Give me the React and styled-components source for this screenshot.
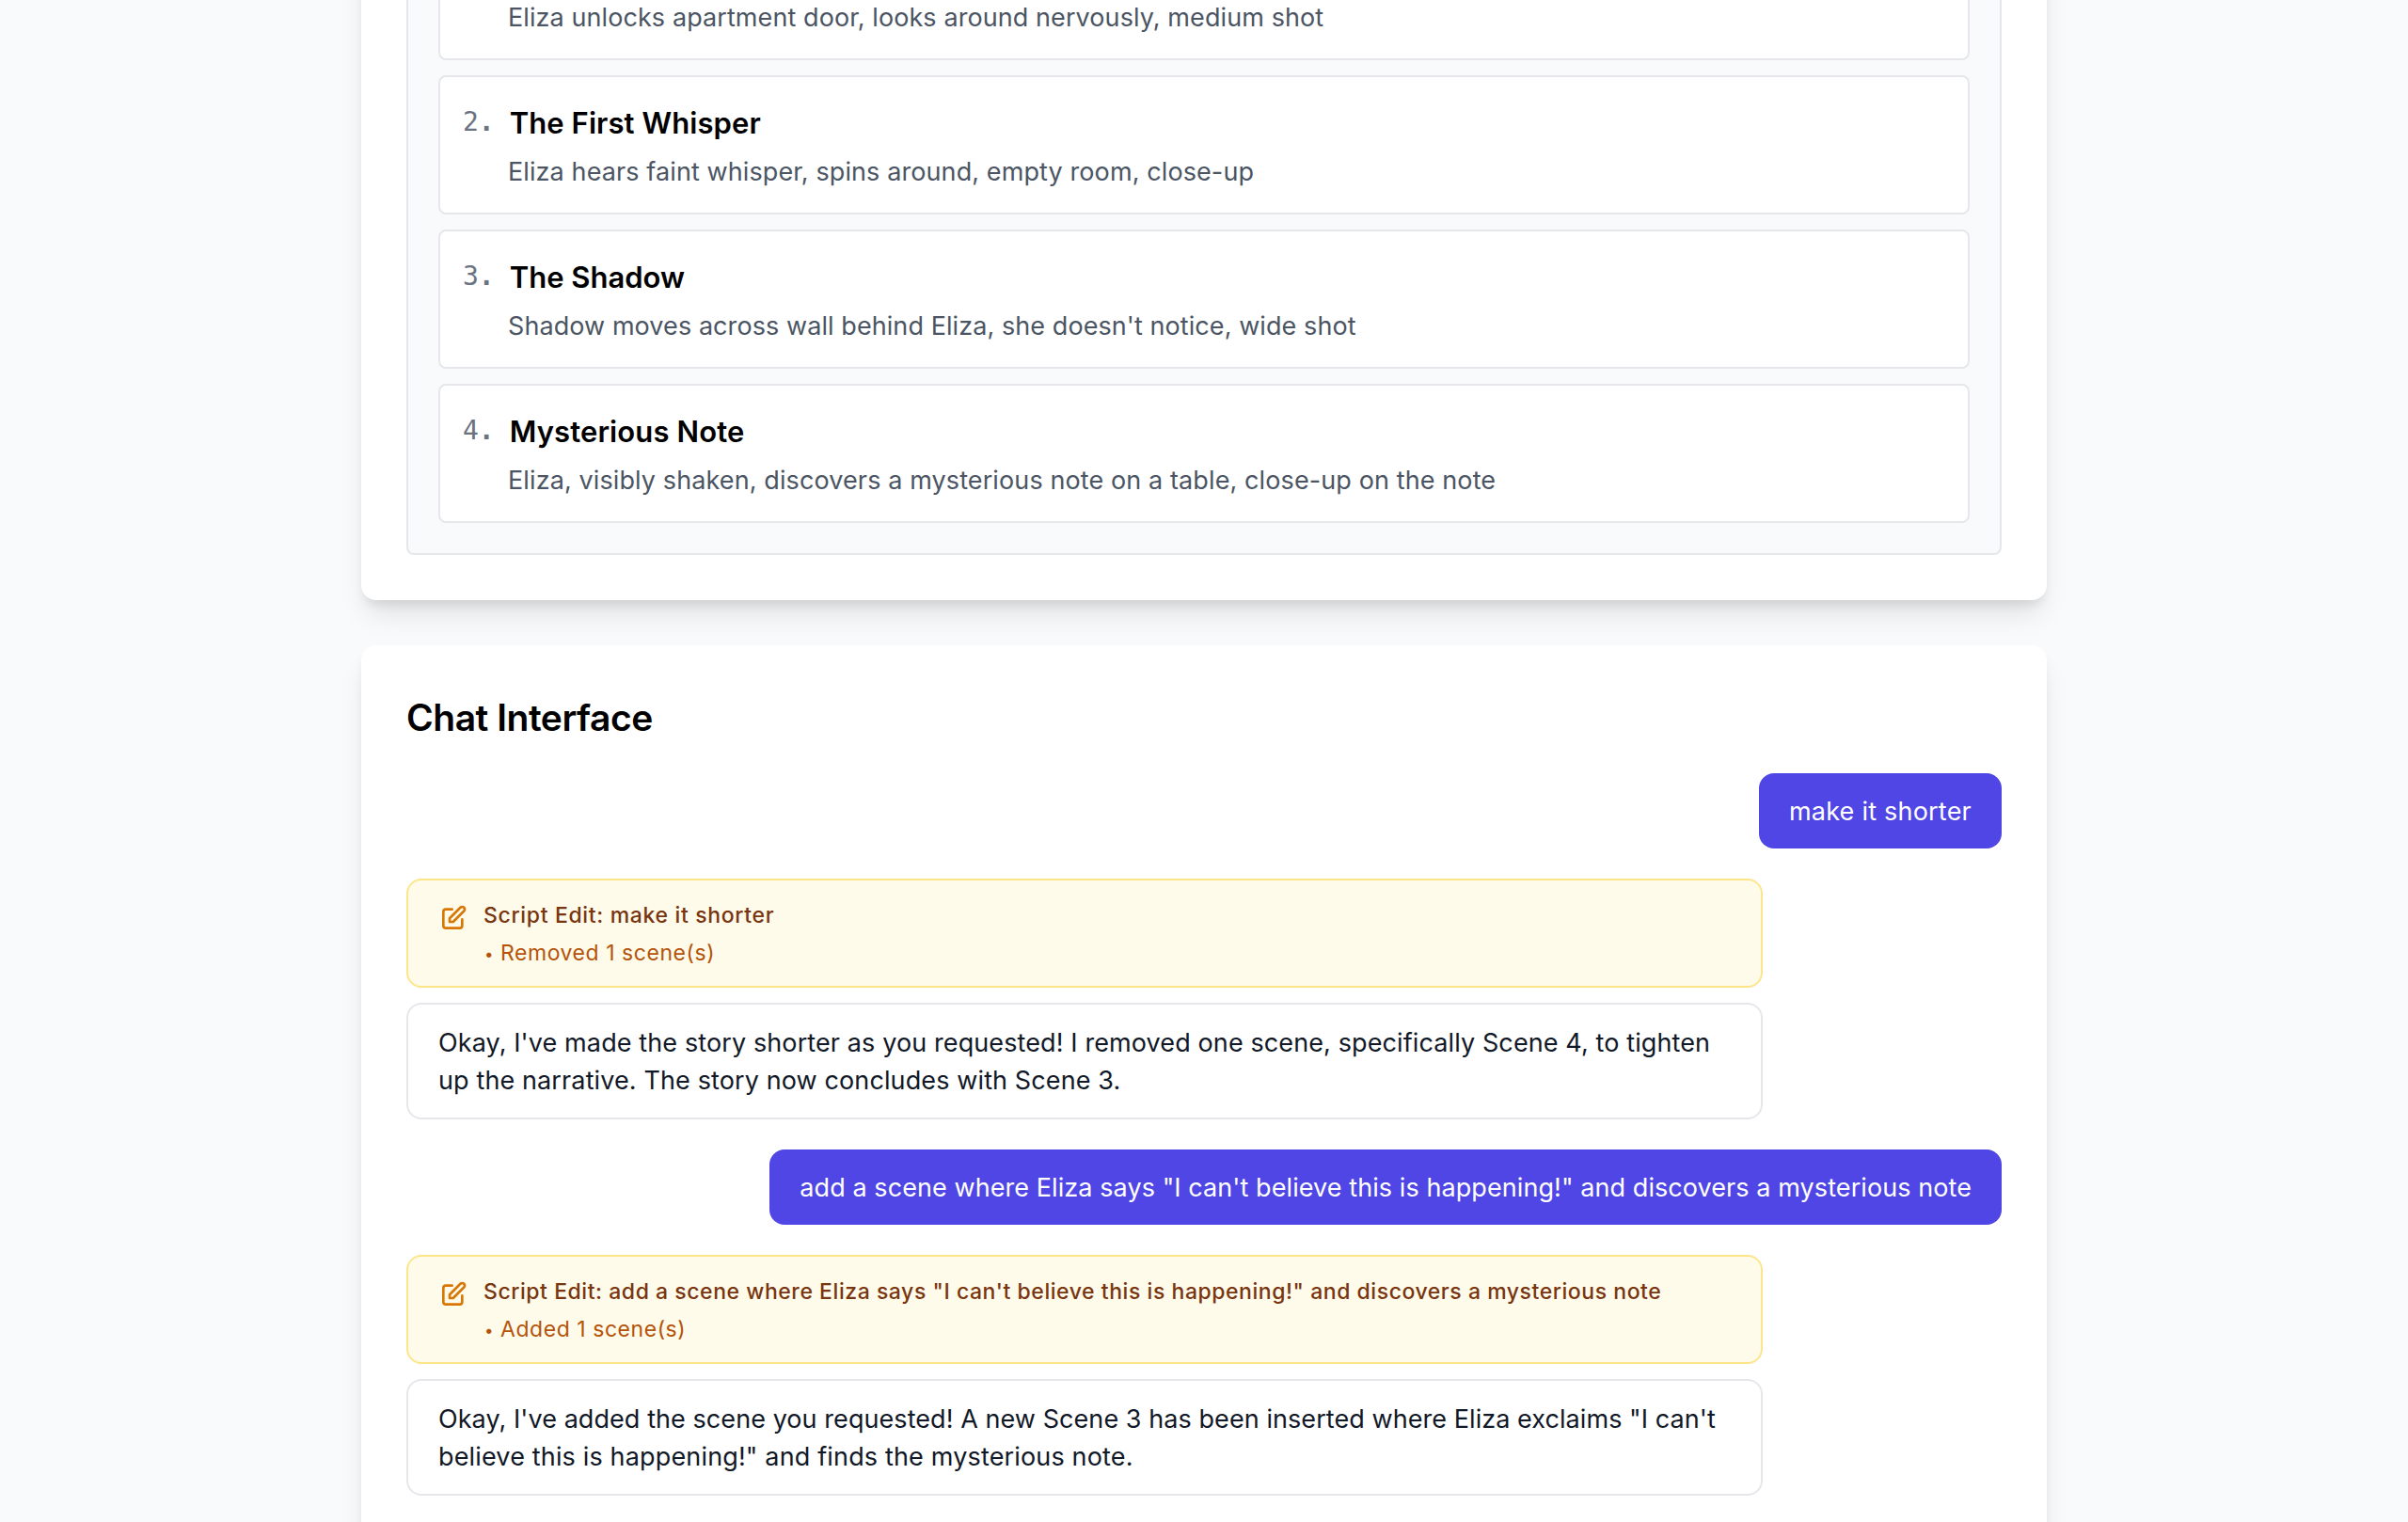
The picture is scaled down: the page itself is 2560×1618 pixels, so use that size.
import React from "react";
import styled, { createGlobalStyle } from "styled-components";

const Global = createGlobalStyle`
  *, *::before, *::after { box-sizing: border-box; }
  html, body { margin: 0; padding: 0; }
  body {
    background: #f9fafb;
    font-family: Inter, "Liberation Sans", sans-serif;
    color: #000;
    font-size: 27px;
    line-height: 40px;
  }
  h2, h3, p, ul, ol { margin: 0; padding: 0; }
  ul, ol { list-style: none; }
`;

const Page = styled.main`
  height: 1618px;
  overflow: hidden;
  display: flex;
  flex-direction: column;
  align-items: center;
  gap: 48px;
`;

const Card = styled.section`
  flex: none;
  width: 1792px;
  padding: 48px;
  border-radius: 16px;
  background: #fff;
  box-shadow: 0 20px 30px -6px rgba(0, 0, 0, 0.1), 0 8px 12px -4px rgba(0, 0, 0, 0.1);
`;

const ScriptCard = styled(Card)`
  height: 838px;
  margin-top: -200px;
`;

const ChatCard = styled(Card)`
  height: 1100px;
`;

const ScenePanel = styled.ol`
  height: 100%;
  display: flex;
  flex-direction: column;
  justify-content: flex-end;
  gap: 16px;
  padding: 32px;
  border: 2px solid #e5e7eb;
  border-radius: 8px;
  background: #f9fafb;
`;

const SceneItem = styled.li`
  flex: none;
  padding: 24px 24px 23px;
  border: 2px solid #e5e7eb;
  border-radius: 8px;
  background: #fff;
`;

const SceneHead = styled.div`
  display: flex;
  align-items: flex-start;
  gap: 16px;
`;

const SceneNumber = styled.span`
  padding-top: 4px;
  font-family: "DejaVu Sans Mono", monospace;
  font-size: 28px;
  line-height: 40px;
  color: #6b7280;

  b { font-weight: 700; }
`;

const SceneTitle = styled.h3`
  padding-top: 2px;
  font-size: 31px;
  line-height: 46px;
  font-weight: 600;
  letter-spacing: ${(p) => p.$track}px;
`;

const SceneText = styled.p`
  margin: 9px 0 0 48px;
  color: #4b5563;
  letter-spacing: ${(p) => p.$track}px;
`;

const ChatTitle = styled.h2`
  margin-bottom: 32px;
  padding-top: 2px;
  font-size: 39px;
  line-height: 54px;
  font-weight: 600;
  letter-spacing: -0.48px;
`;

const Thread = styled.div`
  display: flex;
  flex-direction: column;
  gap: 32px;
`;

const UserBubble = styled.p`
  align-self: flex-end;
  padding: 21px 32px 19px;
  border-radius: 16px;
  background: #4f46e5;
  color: #fff;
  letter-spacing: ${(p) => p.$track}px;
  white-space: nowrap;
`;

const Reply = styled.div`
  width: 85%;
  display: flex;
  flex-direction: column;
  gap: 16px;
`;

const EditNotice = styled.div`
  display: flex;
  align-items: flex-start;
  gap: 16px;
  padding: 21px 32px 19px;
  border: 2px solid #fde68a;
  border-radius: 16px;
  background: #fffbeb;
  font-size: 23px;
  line-height: 32px;
  white-space: nowrap;
`;

const EditIcon = styled.svg`
  flex: none;
  width: 32px;
  height: 32px;
  margin-top: 3px;
  color: #d97706;
`;

const EditBody = styled.div`
  display: flex;
  flex-direction: column;
  gap: 8px;
`;

const EditTitle = styled.p`
  font-weight: 500;
  color: #78350f;
  letter-spacing: ${(p) => p.$track}px;
`;

const EditChange = styled.li`
  display: flex;
  align-items: flex-start;
  height: 32px;
  color: #b45309;
  letter-spacing: 0.55px;
`;

const Bullet = styled.span`
  width: 18px;
  padding-left: 1px;
  font-size: 17px;
  line-height: 34px;
`;

const BotBubble = styled.p`
  padding: 21px 32px 19px;
  border: 2px solid #e5e7eb;
  border-radius: 16px;
  background: #fff;
  color: #111827;
`;

const ReplyLine = styled.span`
  display: block;
  white-space: nowrap;
  letter-spacing: ${(p) => p.$track}px;
`;

const scenes = [
  { n: 1, text: "Eliza unlocks apartment door, looks around nervously, medium shot", track: 0.084 },
  { n: 2, title: "The First Whisper", titleTrack: 0.079, text: "Eliza hears faint whisper, spins around, empty room, close-up", track: 0.1 },
  { n: 3, title: "The Shadow", titleTrack: 0, text: "Shadow moves across wall behind Eliza, she doesn't notice, wide shot", track: 0.074 },
  { n: 4, title: "Mysterious Note", titleTrack: 0.117, text: "Eliza, visibly shaken, discovers a mysterious note on a table, close-up on the note", track: 0.106 },
];

const exchanges = [
  {
    request: "make it shorter",
    track: 0.219,
    editTrack: 0.661,
    change: "Removed 1 scene(s)",
    reply: [
      { text: "Okay, I've made the story shorter as you requested! I removed one scene, specifically Scene 4, to tighten", track: 0.108 },
      { text: "up the narrative. The story now concludes with Scene 3.", track: 0.115 },
    ],
  },
  {
    request: 'add a scene where Eliza says "I can\'t believe this is happening!" and discovers a mysterious note',
    track: 0.077,
    editTrack: 0.549,
    change: "Added 1 scene(s)",
    reply: [
      { text: 'Okay, I\'ve added the scene you requested! A new Scene 3 has been inserted where Eliza exclaims "I can\'t', track: 0.066 },
      { text: 'believe this is happening!" and finds the mysterious note.', track: 0.156 },
    ],
  },
];

function PencilSquare() {
  return (
    <EditIcon viewBox="0 0 24 24" fill="none" stroke="currentColor" strokeWidth="2" strokeLinecap="round" strokeLinejoin="round">
      <path d="M11 5H6a2 2 0 00-2 2v11a2 2 0 002 2h11a2 2 0 002-2v-5m-1.414-9.414a2 2 0 112.828 2.828L11.828 15H9v-2.828l8.586-8.586z" />
    </EditIcon>
  );
}

export default function App() {
  return (
    <>
      <Global />
      <Page>
        <ScriptCard>
          <ScenePanel>
            {scenes.map((s) => (
              <SceneItem key={s.n}>
                {s.title && (
                  <SceneHead>
                    <SceneNumber>
                      {s.n}
                      <b>.</b>
                    </SceneNumber>
                    <SceneTitle $track={s.titleTrack}>{s.title}</SceneTitle>
                  </SceneHead>
                )}
                <SceneText $track={s.track}>{s.text}</SceneText>
              </SceneItem>
            ))}
          </ScenePanel>
        </ScriptCard>
        <ChatCard>
          <ChatTitle>Chat Interface</ChatTitle>
          <Thread>
            {exchanges.map((e) => (
              <React.Fragment key={e.request}>
                <UserBubble $track={e.track}>{e.request}</UserBubble>
                <Reply>
                  <EditNotice>
                    <PencilSquare />
                    <EditBody>
                      <EditTitle $track={e.editTrack}>Script Edit: {e.request}</EditTitle>
                      <ul>
                        <EditChange>
                          <Bullet>•</Bullet>
                          {e.change}
                        </EditChange>
                      </ul>
                    </EditBody>
                  </EditNotice>
                  <BotBubble>
                    {e.reply.map((line) => (
                      <ReplyLine key={line.text} $track={line.track}>{line.text}</ReplyLine>
                    ))}
                  </BotBubble>
                </Reply>
              </React.Fragment>
            ))}
          </Thread>
        </ChatCard>
      </Page>
    </>
  );
}
